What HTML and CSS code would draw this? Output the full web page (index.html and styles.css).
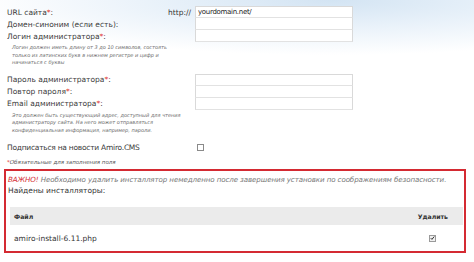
FILE: index.html
```html
<!DOCTYPE html>
<html lang="ru">
<head>
<meta charset="utf-8">
<link rel="stylesheet" href="styles.css">
</head>
<body>
<div class="page">
  <div class="form">
    <div class="row">
      <div class="lbl"><span>URL сайта<span class="req">*</span>:</span><span class="prefix">http://</span></div>
      <div class="input">yourdomain.net/</div>
    </div>
    <div class="row">
      <div class="lbl"><span>Домен-синоним (если есть):</span></div>
      <div class="input"></div>
    </div>
    <div class="row">
      <div class="lbl"><span>Логин администратора<span class="req">*</span>:</span></div>
      <div class="input"></div>
    </div>
    <p class="help">Логин должен иметь длину от 3 до 10 символов, состоять<br>только из латинских букв в нижнем регистре и цифр и<br>начинаться с буквы</p>
    <div class="row">
      <div class="lbl"><span>Пароль администратора<span class="req">*</span>:</span></div>
      <div class="input"></div>
    </div>
    <div class="row">
      <div class="lbl"><span>Повтор пароля<span class="req">*</span>:</span></div>
      <div class="input"></div>
    </div>
    <div class="row">
      <div class="lbl"><span>Email администратора<span class="req">*</span>:</span></div>
      <div class="input"></div>
    </div>
    <p class="help">Это должен быть существующий адрес, доступный для чтения<br>администратору сайта. На него может отправляться<br>конфиденциальная информация, например, пароли.</p>
    <div class="row sub">
      <div class="lbl"><span class="narrow">Подписаться на новости Amiro.CMS</span></div>
      <div class="cell"><span class="cb"></span></div>
    </div>
  </div>
  <p class="note"><span class="req">*</span>Обязательные для заполнения поля</p>
  <div class="alert">
    <p class="warn"><span class="imp">ВАЖНО!</span> Необходимо удалить инсталлятор немедленно после завершения установки по соображениям безопасности.</p>
    <p class="found">Найдены инсталляторы:</p>
    <table class="files">
      <thead>
        <tr><th class="c-file">Файл</th><th class="c-del">Удалить</th></tr>
      </thead>
      <tbody>
        <tr><td class="c-file">amiro-install-6.11.php</td><td class="c-del"><span class="cb checked"><svg viewBox="0 0 8 8" width="6" height="6"><path d="M1.2 4.2 L3.1 6.2 L6.8 1.6" fill="none" stroke="#222" stroke-width="1.5"/></svg></span></td></tr>
      </tbody>
    </table>
  </div>
</div>
</body>
</html>
```

FILE: styles.css
```css
html, body {
  margin: 0;
  padding: 0;
}
body {
  width: 474px;
  height: 262px;
  overflow: hidden;
  font-family: "DejaVu Sans", Verdana, sans-serif;
  font-size: 7.5px;
  color: #3a3a3a;
  background:
    radial-gradient(ellipse 360px 55px at 70% 0, #d3e4f3 0%, rgba(222,235,247,0.65) 50%, rgba(255,255,255,0) 100%),
    #ffffff;
}
.page {
  padding: 6px 0 0 0;
}
.form {
  display: flex;
  flex-direction: column;
  padding-left: 7px;
}
.row {
  display: flex;
  height: 12px;
  align-items: center;
}
.lbl {
  width: 188px;
  display: flex;
  justify-content: space-between;
  align-items: center;
  white-space: nowrap;
}
.narrow {
  letter-spacing: -0.25px;
}
.prefix {
  padding-right: 4px;
  color: #333;
}
.req {
  color: #e0352b;
}
.input {
  box-sizing: border-box;
  width: 158px;
  height: 12px;
  border: 1px solid #d9d9d9;
  border-bottom-color: #e2e2e2;
  background: #fff;
  font-size: 7px;
  line-height: 10px;
  padding-left: 2px;
  color: #222;
  letter-spacing: -0.3px;
}
.row + .row .input {
  border-top: none;
}
.help {
  margin: 2px 0 7px 5px;
  font-size: 5px;
  line-height: 7.5px;
  font-style: italic;
  color: #6b6b6b;
}
.cell {
  display: flex;
  align-items: center;
  padding-left: 2px;
}
.cb {
  box-sizing: border-box;
  display: inline-flex;
  align-items: center;
  justify-content: center;
  width: 7px;
  height: 7px;
  border: 1px solid #8a8a8a;
  background: #fff;
}
.cb.checked {
  border-color: #9a9a9a;
  background: #f0f0f0;
}
.note {
  margin: 5px 0 0 7px;
  font-size: 5.5px;
  line-height: 8px;
  font-style: italic;
  color: #555;
}
.alert {
  margin: 3px 8px 0 4px;
  border: 2px solid #d42a32;
  padding: 3px 1px 0 2px;
  height: 77px;
  box-sizing: content-box;
}
.warn {
  margin: 0;
  font-style: italic;
  font-size: 7.1px;
  line-height: 11px;
  color: #777;
  white-space: nowrap;
  letter-spacing: -0.1px;
}
.imp {
  color: #d42a32;
}
.found {
  margin: 0;
  line-height: 11px;
  color: #333;
}
.files {
  margin: 11px 0 0 2px;
  width: 453px;
  border-collapse: collapse;
}
.files th {
  background: #ebebeb;
  height: 18px;
  padding: 0 4px;
  font-size: 6.2px;
  font-weight: bold;
  color: #333;
  text-align: left;
}
.files th.c-del {
  text-align: right;
  padding-right: 15px;
}
.files td {
  height: 26px;
  padding: 0 4px;
  color: #333;
}
.files td.c-del {
  text-align: right;
  padding-right: 27px;
}
.files td .cb {
  vertical-align: middle;
}
```
